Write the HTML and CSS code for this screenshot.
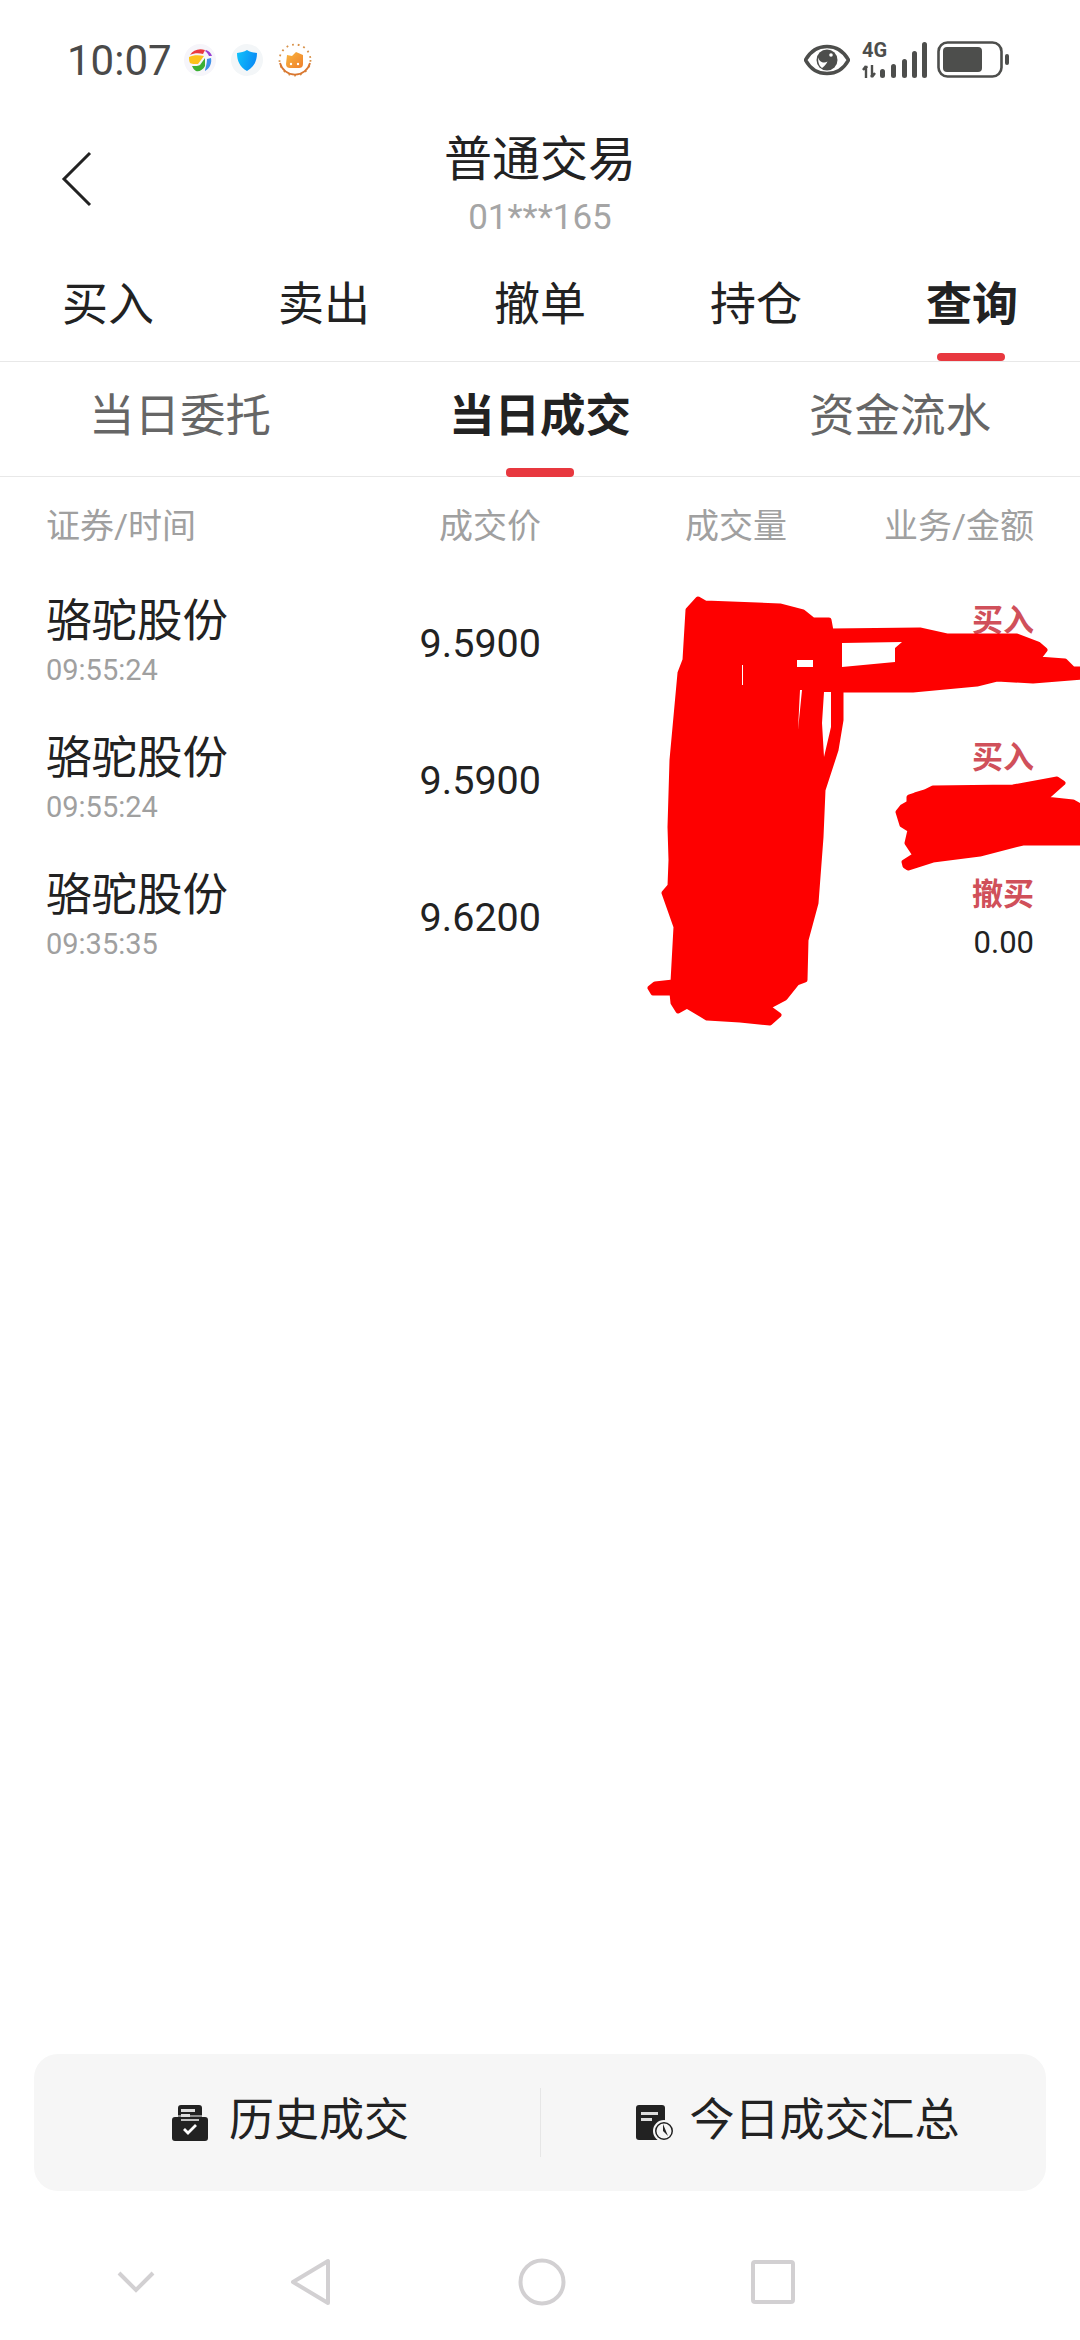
FILE: index.html
```html
<!DOCTYPE html>
<html>
<head>
    <title>普通交易</title>
    <link rel="stylesheet" href="styles.css">
</head>
<body>
    <div class="page">
        <div class="status-bar">
            <span class="clock">10:07</span>
            <div class="notify-icons">
                <svg width="32" height="32" viewBox="0 0 32 32">
                    <circle cx="16" cy="16" r="16" fill="#f6f5fa"/>
                    <path d="M6 11C9 6 15 4 21 6L19 10C15 9 10 9 6 11Z" fill="#ea3a3f"/>
                    <path d="M5 13C9 11 15 11 20 12L14 20C11 20 7 20 6 19C5 17 5 15 5 13Z" fill="#fcc21b"/>
                    <path d="M8 22C11 22 15 22 16 21L21 14L21 22C19 26 15 28 12 27C10 26 9 24 8 22Z" fill="#3cb034"/>
                    <path d="M23 15L27 14C28 19 26 24 21 27C21 25 23 20 23 15Z" fill="#3f8fe8"/>
                    <path d="M22 6C25 7 27 9 28 12L25 12C24 10 23 8 21 7Z" fill="#9a3fd0"/>
                </svg>
                <svg width="32" height="32" viewBox="0 0 32 32">
                    <defs>
                        <linearGradient id="shield" x1="0" y1="0" x2="1" y2="0.3">
                            <stop offset="0" stop-color="#10c4fb"/>
                            <stop offset="1" stop-color="#0a8cf5"/>
                        </linearGradient>
                    </defs>
                    <circle cx="16" cy="16" r="16" fill="#f3f6f8"/>
                    <path d="M16 6C19 8 22 8.500 26 9C26 17 23 23 16 27C9 23 6 17 6 9C10 8.500 13 8 16 6Z" fill="url(#shield)"/>
                </svg>
                <svg width="34" height="34" viewBox="0 0 34 34">
                    <defs>
                        <linearGradient id="cat" x1="0" y1="0" x2="1" y2="1">
                            <stop offset="0" stop-color="#f9b73f"/>
                            <stop offset="1" stop-color="#ef7f2c"/>
                        </linearGradient>
                    </defs>
                    <circle cx="17" cy="17" r="15.500" fill="none" stroke="#d8924a" stroke-width="1.800" stroke-dasharray="1.800 4"/>
                    <path d="M2 20A15.500 15.500 0 0 0 32 20" fill="none" stroke="#d9762f" stroke-width="1.800"/>
                    <path d="M9 12L14 13L18 9L25 12V21C25 24 23 25 21 25H12C10 25 8 24 8 21Z" fill="url(#cat)"/>
                    <circle cx="13" cy="21" r="1.200" fill="#fff"/>
                    <circle cx="20" cy="21" r="1.200" fill="#fff"/>
                </svg>
            </div>
            <div class="system-icons">
                <svg width="46" height="32" viewBox="0 0 46 32">
                    <path d="M1.500 16C7 6 15 2.500 23 2.500S39 6 44.500 16C39 26 31 29.500 23 29.500S7 26 1.500 16Z" fill="none" stroke="#4d4e4c" stroke-width="3.500" stroke-linejoin="round"/>
                    <circle cx="23" cy="16" r="10.500" fill="#4d4e4c"/>
                    <path d="M14.500 13.500C15 18 20 20 23.500 17.500C22 21 18.500 24 18 24C15 22 13.500 17 14.500 13.500Z" fill="#fff"/>
                    <circle cx="27" cy="11" r="1.800" fill="#fff"/>
                </svg>
                <div class="signal">
                    <span class="net-label">4G</span>
                    <svg width="66" height="38" viewBox="0 0 66 38">
                        <path d="M4 37V25M4 25L1 29M4 25L5 27M10 24V36M10 36L13 32M10 36L9 34" fill="none" stroke="#4d4e4c" stroke-width="2.400"/>
                        <rect x="18" y="28" width="5" height="9" rx="2.500" fill="#4d4e4c"/>
                        <rect x="29" y="23" width="5" height="14" rx="2.500" fill="#4d4e4c"/>
                        <rect x="40" y="18" width="5" height="19" rx="2.500" fill="#4d4e4c"/>
                        <rect x="50" y="10" width="5" height="27" rx="2.500" fill="#4d4e4c"/>
                        <rect x="60" y="1" width="5" height="36" rx="2.500" fill="#4d4e4c"/>
                    </svg>
                </div>
                <svg class="battery" width="72" height="38" viewBox="0 0 72 38">
                    <rect x="1.500" y="1.500" width="63" height="34" rx="9" fill="none" stroke="#4d4e4c" stroke-width="2.600"/>
                    <rect x="6" y="6" width="39" height="25" rx="4" fill="#4d4e4c"/>
                    <rect x="68" y="13" width="4" height="11" rx="2" fill="#4d4e4c"/>
                </svg>
            </div>
        </div>

        <div class="title-bar">
            <svg class="back-icon" width="32" height="58" viewBox="0 0 32 58">
                <path d="M29 3L3 29L29 55" fill="none" stroke="#222" stroke-width="3"/>
            </svg>
            <div class="title">普通交易</div>
            <div class="account">01***165</div>
        </div>

        <div class="main-tabs">
            <div class="main-tab">买入</div>
            <div class="main-tab">卖出</div>
            <div class="main-tab">撤单</div>
            <div class="main-tab">持仓</div>
            <div class="main-tab active">查询</div>
        </div>

        <div class="sub-tabs">
            <div class="sub-tab">当日委托</div>
            <div class="sub-tab active">当日成交</div>
            <div class="sub-tab">资金流水</div>
        </div>

        <div class="table-head">
            <div>证券/时间</div>
            <div class="num">成交价</div>
            <div class="num">成交量</div>
            <div class="num">业务/金额</div>
        </div>

        <div class="deal-row">
            <div>
                <div class="stock-name">骆驼股份</div>
                <div class="deal-time">09:55:24</div>
            </div>
            <div class="num price">9.5900</div>
            <div></div>
            <div class="num">
                <div class="deal-type">买入</div>
                <div class="deal-amount"></div>
            </div>
        </div>
        <div class="deal-row">
            <div>
                <div class="stock-name">骆驼股份</div>
                <div class="deal-time">09:55:24</div>
            </div>
            <div class="num price">9.5900</div>
            <div></div>
            <div class="num">
                <div class="deal-type">买入</div>
                <div class="deal-amount"></div>
            </div>
        </div>
        <div class="deal-row">
            <div>
                <div class="stock-name">骆驼股份</div>
                <div class="deal-time">09:35:35</div>
            </div>
            <div class="num price">9.6200</div>
            <div></div>
            <div class="num">
                <div class="deal-type">撤买</div>
                <div class="deal-amount">0.00</div>
            </div>
        </div>

        <div class="action-card">
            <div class="action left">
                <svg width="38" height="38" viewBox="0 0 38 38">
                    <path d="M7 13V4C7 2 8 1 10 1H28C30 1 31 2 31 4V13H34C36 13 37 14 37 16V34C37 36 36 37 34 37H4C2 37 1 36 1 34V16C1 14 2 13 4 13Z" fill="#222"/>
                    <path d="M5 12H33" stroke="#f6f6f6" stroke-width="1"/>
                    <path d="M10 16H28" stroke="#f6f6f6" stroke-width="1.500"/>
                    <rect x="10" y="5" width="14" height="3" fill="#ddd"/>
                    <rect x="10" y="10" width="9" height="3" fill="#ddd"/>
                    <path d="M13 25L17 29L25 21" fill="none" stroke="#fff" stroke-width="2.800"/>
                </svg>
                <span>历史成交</span>
            </div>
            <div class="action right">
                <svg width="40" height="38" viewBox="0 0 40 38">
                    <rect x="1" y="1" width="29" height="35" rx="3" fill="#222"/>
                    <rect x="6" y="8" width="17" height="3" fill="#ddd"/>
                    <rect x="6" y="14" width="11" height="3" fill="#ddd"/>
                    <circle cx="29" cy="27" r="10" fill="#222" stroke="#f6f6f6" stroke-width="2"/>
                    <circle cx="29" cy="27" r="7.500" fill="#f6f6f6"/>
                    <path d="M28 20V27L33 32Z" fill="#222"/>
                </svg>
                <span>今日成交汇总</span>
            </div>
        </div>

        <svg class="nav-bar" width="1080" height="149" viewBox="0 2191 1080 149">
            <path d="M119 2273L136 2290L153 2273" fill="none" stroke="#d2d0d2" stroke-width="4"/>
            <path d="M328 2261V2303L293 2282Z" fill="none" stroke="#d2d0d2" stroke-width="4" stroke-linejoin="round"/>
            <circle cx="542" cy="2282" r="21.500" fill="none" stroke="#d2d0d2" stroke-width="4"/>
            <rect x="753" y="2262" width="40" height="40" rx="2" fill="none" stroke="#d2d0d2" stroke-width="4"/>
        </svg>

        <!-- the red marker scribble painted over the screenshot -->
        <svg class="scribble" width="1080" height="1100" viewBox="0 0 1080 1100">
            <g fill="#fe0000" stroke="#fe0000" stroke-width="5" stroke-linejoin="round">
                <path d="M685 660L688 610L698 599L705 603L780 606L803 612L813 620L829 620L831 631L920 630L947 636L1017 636L1038 644L1045 650L1038 659L1065 661L1073 669L1082 669L1082 677L1033 681L997 679L977 684L913 690L841 690L841 720L836 750L823 790L821 837L816 903L806 940L805 980L797 983L785 998L768 1007L779 1015L770 1023L740 1020L707 1018L687 1006L678 1011L673 1003L672 993L653 993L650 988L655 984L673 982L676 927L664 893L670 886L671 860L670 827L672 760L680 673Z"/>
                <path d="M905 866L904 862L915 855L907 843L910 830L902 825L898 812L902 807L909 803L909 797L915 795L925 792L933 788L1013 787L1057 779L1063 783L1045 799L1073 802L1082 807L1082 843L1023 843L980 854L933 860L908 868Z"/>
            </g>
            <path fill="#fff" d="M842 643L902 642L895 648L895 662L842 667Z M797 660L813 660L813 667L797 667Z M824 692L831 692L831 727L824 757L822 723Z M742 665L743 665L743 685L742 685Z M800 690L802 690L798 730Z"/>
        </svg>
    </div>
</body>
</html>
```

FILE: styles.css
```css
body {
    margin: 0;
    background-color: white;
    font-family: Roboto, "Noto Sans CJK SC", sans-serif;
    color: #222;
}
.page {
    position: relative;
    display: flex;
    flex-direction: column;
    width: 1080px;
    height: 2340px;
    overflow: hidden;
}
.status-bar {
    display: flex;
    align-items: center;
    height: 120px;
    padding: 0 71px 0 67px;
    box-sizing: border-box;
}
.clock {
    font-size: 42px;
    color: #4a4a4a;
}
.notify-icons {
    display: flex;
    align-items: center;
    gap: 15px;
    margin-left: 12px;
}
.system-icons {
    display: flex;
    align-items: center;
    margin-left: auto;
}
.signal {
    position: relative;
    height: 38px;
    margin-left: 12px;
}
.battery {
    margin-left: 9px;
}
.net-label {
    position: absolute;
    left: 0;
    top: 0;
    font-size: 20px;
    font-weight: 700;
    line-height: 18px;
    color: #4d4e4c;
}
.title-bar {
    position: relative;
    height: 130px;
    text-align: center;
}
.back-icon {
    position: absolute;
    left: 61px;
    top: 30px;
}
.title {
    font-size: 48px;
    line-height: 80px;
}
.account {
    font-size: 35px;
    line-height: 36px;
    color: #a5a5a5;
}
.main-tabs {
    display: flex;
    height: 112px;
    box-sizing: border-box;
    border-bottom: 1px solid #e8e8e8;
}
.main-tab {
    position: relative;
    flex: 1;
    padding-top: 25px;
    font-size: 46px;
    line-height: 58px;
    text-align: center;
}
.main-tab.active {
    font-weight: 700;
}
.main-tab.active::after {
    content: "";
    position: absolute;
    left: 73px;
    bottom: 0;
    width: 68px;
    height: 8px;
    border-radius: 4px;
    background-color: #e8383f;
}
.sub-tabs {
    display: flex;
    height: 115px;
    box-sizing: border-box;
    border-bottom: 1px solid #e8e8e8;
}
.sub-tab {
    position: relative;
    flex: 1;
    padding-top: 26px;
    font-size: 45.500px;
    line-height: 58px;
    text-align: center;
    color: #666;
}
.sub-tab.active {
    font-weight: 700;
    color: #222;
}
.sub-tab.active::after {
    content: "";
    position: absolute;
    left: 146px;
    bottom: -1px;
    width: 68px;
    height: 9px;
    border-radius: 4px;
    background-color: #e8383f;
}
.table-head,
.deal-row {
    display: grid;
    grid-template-columns: 300px 195px 246px 247px;
    align-items: center;
    padding: 0 46px;
}
.table-head {
    height: 98px;
    padding-bottom: 6px;
    box-sizing: border-box;
    font-size: 34px;
    color: #a0a0a0;
}
.deal-row {
    height: 137px;
}
.num {
    text-align: right;
}
.stock-name {
    margin-top: 1px;
    font-size: 45.500px;
    line-height: 52px;
}
.deal-time {
    font-size: 29px;
    line-height: 44px;
    color: #a0a0a0;
}
.price {
    font-size: 39.500px;
}
.deal-type {
    margin-top: 2px;
    font-size: 31px;
    font-weight: 700;
    line-height: 48px;
    color: #d0505a;
}
.deal-amount {
    min-height: 48px;
    font-size: 31px;
    line-height: 48px;
}
.action-card {
    display: flex;
    align-items: center;
    height: 137px;
    margin: auto 34px 0;
    border-radius: 24px;
    background-color: #f6f6f6;
}
.action {
    display: flex;
    flex: none;
    width: 50%;
    align-items: center;
    justify-content: center;
    gap: 20px;
    height: 69px;
    font-size: 45px;
    box-sizing: border-box;
}
.action span {
    margin-bottom: 12px;
}
.action.left {
    padding-left: 6px;
}
.action.right {
    padding-left: 8px;
    gap: 14px;
    border-left: 1px solid #e6e6e6;
}
.nav-bar {
    display: block;
}
.scribble {
    position: absolute;
    left: 0;
    top: 0;
}
```
